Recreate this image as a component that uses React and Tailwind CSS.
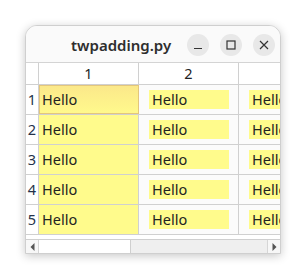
import React from 'react';

const rows = [1, 2, 3, 4, 5];

const WinButton = ({ children }) => (
  <div className="w-[22px] h-[22px] rounded-full bg-[#e8e8e8] flex items-center justify-center">
    {children}
  </div>
);

export default function App() {
  return (
    <div
      className="w-[306px] h-[279px] bg-white pt-[25px] pl-[25px]"
      style={{ fontFamily: '"Noto Sans", "DejaVu Sans", sans-serif' }}
    >
      <div className="w-[256px] h-[229px] rounded-t-[12px] bg-white border border-[#cfcfcf] shadow-[0_2px_10px_rgba(0,0,0,0.22)] flex flex-col overflow-hidden">
        {/* title bar */}
        <div className="h-[37px] shrink-0 bg-[#fafafa] border-b border-[#d4d4d4] flex items-center pl-[45px] pr-[5px] pt-[2px]">
          <span className="text-[15px] font-semibold text-[#2e2e2e] leading-none">twpadding.py</span>
          <div className="ml-auto flex items-center gap-[11px]">
            <WinButton>
              <svg width="10" height="10" viewBox="0 0 10 10">
                <path d="M1 8.5h8" stroke="#333" strokeWidth="1.2" />
              </svg>
            </WinButton>
            <WinButton>
              <svg width="10" height="10" viewBox="0 0 10 10">
                <rect x="1" y="1" width="8" height="8" fill="none" stroke="#333" strokeWidth="1.2" />
              </svg>
            </WinButton>
            <WinButton>
              <svg width="10" height="10" viewBox="0 0 10 10">
                <path d="M1 1L9 9M9 1L1 9" stroke="#333" strokeWidth="1.2" />
              </svg>
            </WinButton>
          </div>
        </div>

        {/* table */}
        <div className="overflow-hidden text-[14.5px] text-[#222]">
          <div className="flex h-[22px] border-b border-[#d0d0d0] bg-white">
            <div className="w-[13px] shrink-0 border-r border-[#d0d0d0]" />
            <div className="w-[100px] shrink-0 border-r border-[#d0d0d0] flex items-center justify-center">1</div>
            <div className="w-[100px] shrink-0 border-r border-[#d0d0d0] flex items-center justify-center">2</div>
            <div className="w-[100px] shrink-0" />
          </div>
          {rows.map((r) => (
            <div key={r} className="flex h-[30px] border-b border-[#d0d0d0] bg-[#fbfbfb]">
              <div className="w-[13px] shrink-0 border-r border-[#d0d0d0] flex items-center justify-center bg-white text-[#24324a]">
                {r}
              </div>
              <div
                className={
                  r === 1
                    ? 'w-[100px] shrink-0 border border-[#e3c67c] bg-gradient-to-b from-[#fbe88a] to-[#fff98c] flex items-center pl-[2px]'
                    : 'w-[100px] shrink-0 border-r border-[#d0d0d0] bg-[#fffb8c] flex items-center pl-[3px]'
                }
              >
                Hello
              </div>
              <div className="w-[100px] shrink-0 border-r border-[#d0d0d0] flex items-center pl-[10px] pr-[9px]">
                <div className="h-[19px] w-full bg-[#fffb8c] flex items-center pl-[3px]">Hello</div>
              </div>
              <div className="w-[100px] shrink-0 flex items-center pl-[10px] pr-[9px]">
                <div className="h-[19px] w-full bg-[#fffb8c] flex items-center pl-[3px]">Hello</div>
              </div>
            </div>
          ))}
        </div>

        <div className="h-[4px] shrink-0 bg-white" />

        {/* horizontal scrollbar */}
        <div className="h-[14px] shrink-0 flex border-t border-[#cfcfcf] bg-[#efefef]">
          <div className="w-[13px] shrink-0 bg-[#f7f7f7] border-r border-[#d6d6d6] flex items-center justify-center">
            <svg width="5" height="8" viewBox="0 0 5 8">
              <path d="M4.5 0L0.5 4L4.5 8Z" fill="#555" />
            </svg>
          </div>
          <div className="w-[92px] shrink-0 bg-white border-r border-[#cfcfcf]" />
          <div className="flex-1" />
          <div className="w-[13px] shrink-0 bg-[#f7f7f7] border-l border-[#d6d6d6] flex items-center justify-center">
            <svg width="5" height="8" viewBox="0 0 5 8">
              <path d="M0.5 0L4.5 4L0.5 8Z" fill="#555" />
            </svg>
          </div>
        </div>
      </div>
    </div>
  );
}
